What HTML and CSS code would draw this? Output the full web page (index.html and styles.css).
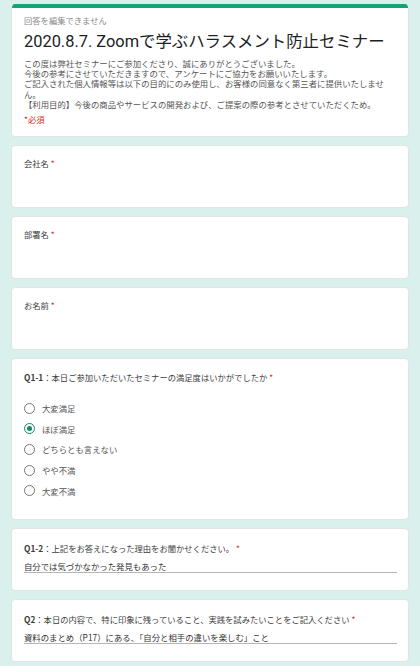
FILE: index.html
```html
<!DOCTYPE html>
<html lang="ja">
<head>
    <meta charset="UTF-8">
    <meta name="viewport" content="width=device-width, initial-scale=1.0">
    <title>2020.8.7. Zoomで学ぶハラスメント防止セミナー</title>
    <link rel="stylesheet" href="styles.css">
</head>
<body>

<div class="form">
    <div class="card head">
        <div class="bar"></div>
        <div class="head-body">
            <div class="note">回答を編集できません</div>
            <h1>2020.8.7. Zoomで学ぶハラスメント防止セミナー</h1>
            <div class="desc">
                この度は弊社セミナーにご参加くださり、誠にありがとうございました。<br>
                今後の参考にさせていただきますので、アンケートにご協力をお願いいたします。<br>
                ご記入された個人情報等は以下の目的にのみ使用し、お客様の同意なく第三者に提供いたしません。<br>
                【利用目的】今後の商品やサービスの開発および、ご提案の際の参考とさせていただくため。
            </div>
            <div class="required">*必須</div>
        </div>
    </div>

    <div class="card field">
        <div class="label">会社名 <span class="star">*</span></div>
    </div>

    <div class="card field">
        <div class="label">部署名 <span class="star">*</span></div>
    </div>

    <div class="card field">
        <div class="label">お名前 <span class="star">*</span></div>
    </div>

    <div class="card question">
        <div class="label"><b>Q1-1</b>：本日ご参加いただいたセミナーの満足度はいかがでしたか <span class="star">*</span></div>
        <div class="options">
            <div class="option"><span class="radio"></span>大変満足</div>
            <div class="option"><span class="radio checked"></span>ほぼ満足</div>
            <div class="option"><span class="radio"></span>どちらとも言えない</div>
            <div class="option"><span class="radio"></span>やや不満</div>
            <div class="option"><span class="radio"></span>大変不満</div>
        </div>
    </div>

    <div class="card answer">
        <div class="label"><b>Q1-2</b>：上記をお答えになった理由をお聞かせください。 <span class="star">*</span></div>
        <div class="value">自分では気づかなかった発見もあった</div>
    </div>

    <div class="card answer">
        <div class="label"><b>Q2</b>：本日の内容で、特に印象に残っていること、実践を試みたいことをご記入ください <span class="star">*</span></div>
        <div class="value">資料のまとめ（P17）にある、「自分と相手の違いを楽しむ」こと</div>
    </div>
</div>

</body>
</html>
```

FILE: styles.css
```css
body {
    margin: 0;
    background-color: #d9f0ec;
    font-family: "Noto Sans CJK JP", sans-serif;
    color: #444;
}

.form {
    width: 398px;
    margin: 0 auto;
    padding: 4px 0 10px;
    display: flex;
    flex-direction: column;
    gap: 8px;
}

.card {
    background-color: #fff;
    border: 1px solid #dfe5e3;
    border-radius: 4px;
    box-sizing: border-box;
}

.head {
    border-top: none;
    overflow: hidden;
    height: 133px;
}

.bar {
    height: 4px;
    background-color: #15a179;
}

.head-body {
    padding: 6px 12px 0;
}

.note {
    font-size: 8.3px;
    line-height: 12px;
    color: #8a8a8a;
}

h1 {
    margin: 4px 0 0;
    font-family: Roboto, "Noto Sans CJK JP", sans-serif;
    font-size: 16.4px;
    font-weight: 400;
    line-height: 24px;
    color: #202124;
}

.desc {
    margin-top: 4px;
    font-size: 8.4px;
    line-height: 10.2px;
    color: #555;
}

.required {
    margin-top: 4px;
    font-size: 8.4px;
    line-height: 12px;
    color: #d93025;
}

.field {
    height: 63px;
    padding: 11px 12px 0;
}

.label {
    font-size: 8.3px;
    line-height: 12px;
    color: #3c3c3c;
}

.label b {
    font-weight: 700;
}

.star {
    color: #d93025;
}

.question {
    height: 162px;
    padding: 12px 12px 0;
}

.options {
    margin-top: 19px;
    display: flex;
    flex-direction: column;
    gap: 8.7px;
}

.option {
    display: flex;
    align-items: center;
    gap: 7px;
    font-size: 8.4px;
    line-height: 12px;
    color: #555;
}

.radio {
    width: 11px;
    height: 11px;
    border: 1.3px solid #777;
    border-radius: 50%;
    box-sizing: border-box;
    display: flex;
    align-items: center;
    justify-content: center;
}

.radio.checked {
    border-color: #118a62;
}

.radio.checked::after {
    content: "";
    width: 5px;
    height: 5px;
    border-radius: 50%;
    background-color: #118a62;
}

.answer {
    height: 63px;
    padding: 13px 12px 0;
}

.value {
    margin-top: 6px;
    width: 373px;
    font-size: 8.4px;
    line-height: 12px;
    color: #333;
    border-bottom: 1px solid #b5b5b5;
}
```
